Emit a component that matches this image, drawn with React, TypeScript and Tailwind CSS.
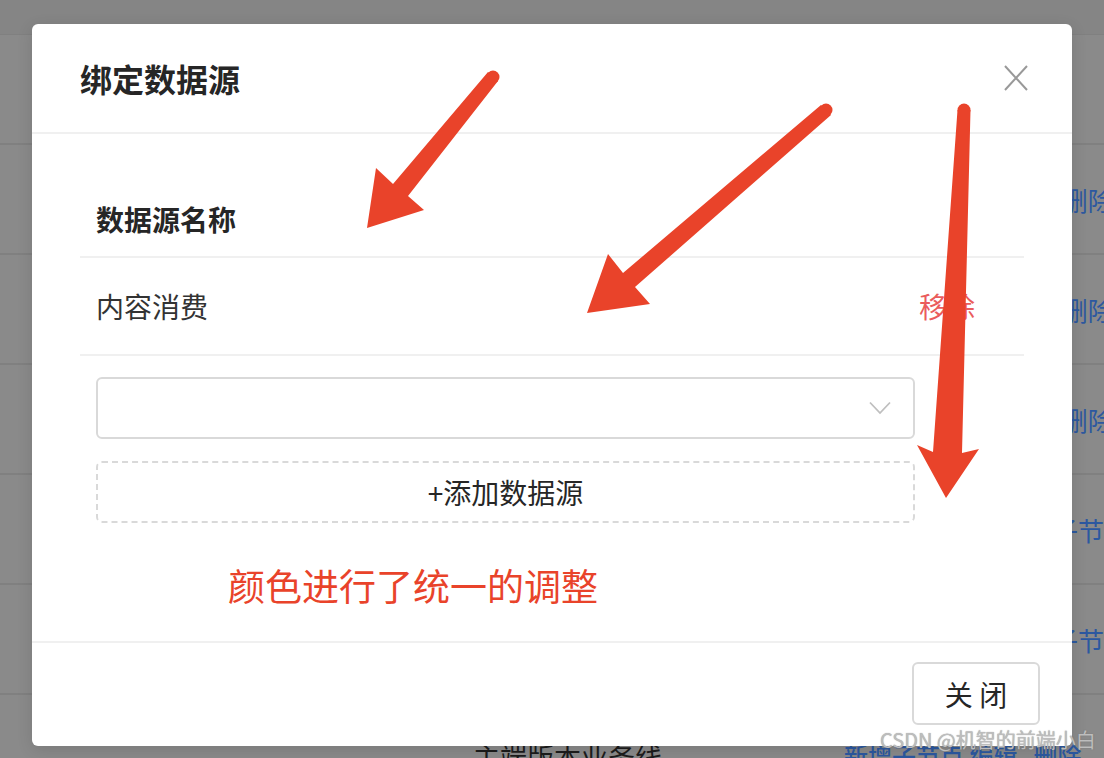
import React from "react";

const bgRows = [
  { text: "", left: "pl-[1062px]" },
  { text: "编辑 删除", left: "pl-[1004px]" },
  { text: "编辑 删除", left: "pl-[1004px]" },
  { text: "编辑 删除", left: "pl-[1004px]" },
  { text: "新增子节点", left: "pl-[1000px]" },
  { text: "新增子节点", left: "pl-[1000px]" },
];

function CloseIcon() {
  return (
    <svg width="24" height="26" viewBox="0 0 24 26" fill="none">
      <path d="M1 1L23 25M23 1L1 25" stroke="#999999" strokeWidth="2" />
    </svg>
  );
}

function ChevronDown() {
  return (
    <svg width="22" height="14" viewBox="0 0 22 14" fill="none">
      <path d="M1 1.5L11 12L21 1.5" stroke="#bfbfbf" strokeWidth="1.8" />
    </svg>
  );
}

function Arrows() {
  return (
    <svg
      className="absolute left-0 top-0 pointer-events-none"
      width="1104"
      height="758"
      viewBox="0 0 1104 758"
    >
      <g fill="#e9432a">
        <circle cx="493" cy="77" r="6.5" />
        <polygon points="488,72 393,184 376,168 367,228 424,210 408,196 498,81" />
        <circle cx="826" cy="110" r="6.5" />
        <polygon points="821,105 623,273 608,254 587,313 650,304 635,287 831,115" />
        <circle cx="964" cy="110" r="6.5" />
        <polygon points="957.5,110 933,452 917,445 946,498 979,449 962,453 970.5,110" />
      </g>
    </svg>
  );
}

export default function App() {
  return (
    <div className="relative w-[1104px] h-[758px] overflow-hidden bg-[#8a8a8a] font-['Noto_Sans_CJK_SC',sans-serif]">
      {/* dimmed page behind the dialog */}
      <div className="flex flex-col">
        <div className="h-[35px] bg-[#858585] border-b border-[#808080]" />
        {bgRows.map((row, i) => (
          <div
            key={i}
            className={`h-[110px] flex items-center border-b-2 border-[#808080] whitespace-nowrap ${row.left}`}
          >
            <span className="text-[26px] text-[#2c58a0]">{row.text}</span>
          </div>
        ))}
        <div className="h-[110px] flex items-start pt-[42px] whitespace-nowrap">
          <span className="ml-[473px] text-[27px] text-[#1c1c1c]">主端版本业务线</span>
          <span className="ml-[182px] text-[24px] font-medium text-[#2c58a0]">新增子节点&nbsp;编辑&nbsp;&nbsp;&nbsp;删除</span>
        </div>
      </div>

      {/* dialog */}
      <div className="absolute left-[32px] top-[24px] w-[1040px] h-[722px] bg-white rounded-[6px] shadow-[0_4px_16px_rgba(0,0,0,0.12)] flex flex-col">
        <div className="h-[110px] shrink-0 flex items-center justify-between pl-[48px] pr-[44px] border-b-2 border-[#f0f0f0]">
          <h1 className="text-[32px] font-bold text-[#262626] leading-none">绑定数据源</h1>
          <CloseIcon />
        </div>

        <div className="flex-1 px-[48px] pt-[48px]">
          <div className="h-[76px] flex items-center px-[16px] border-b-2 border-[#f0f0f0]">
            <span className="text-[28px] font-bold text-[#262626]">数据源名称</span>
          </div>
          <div className="h-[98px] flex items-center justify-between pl-[16px] pr-[49px] border-b-2 border-[#f0f0f0]">
            <span className="text-[28px] text-[#333333]">内容消费</span>
            <span className="text-[28px] text-[#ea5c5c]">移除</span>
          </div>

          <div className="ml-[16px] w-[819px]">
            <div className="mt-[21px] h-[62px] border-2 border-[#d9d9d9] rounded-[6px] flex items-center justify-end pr-[22px]">
              <ChevronDown />
            </div>
            <div className="mt-[22px] h-[62px] border-2 border-dashed border-[#d9d9d9] rounded-[6px] flex items-center justify-center">
              <span className="text-[28px] text-[#262626]">+添加数据源</span>
            </div>
          </div>

          <p className="mt-[38px] ml-[148px] text-[37px] leading-[48px] text-[#e9432a]">颜色进行了统一的调整</p>
        </div>

        <div className="h-[105px] shrink-0 border-t-2 border-[#f0f0f0] flex items-start justify-end pt-[19px] pr-[32px]">
          <button className="w-[128px] h-[63px] border-2 border-[#d9d9d9] rounded-[6px] bg-white text-[28px] text-[#262626] flex items-center justify-center">
            关&nbsp;闭
          </button>
        </div>
      </div>

      <Arrows />

      <span className="absolute left-[880px] top-[725px] text-[20px] text-[#bdbdbd] whitespace-nowrap [text-shadow:0_0_1px_rgba(90,90,90,0.6)]">
        CSDN @机智的前端小白
      </span>
    </div>
  );
}
